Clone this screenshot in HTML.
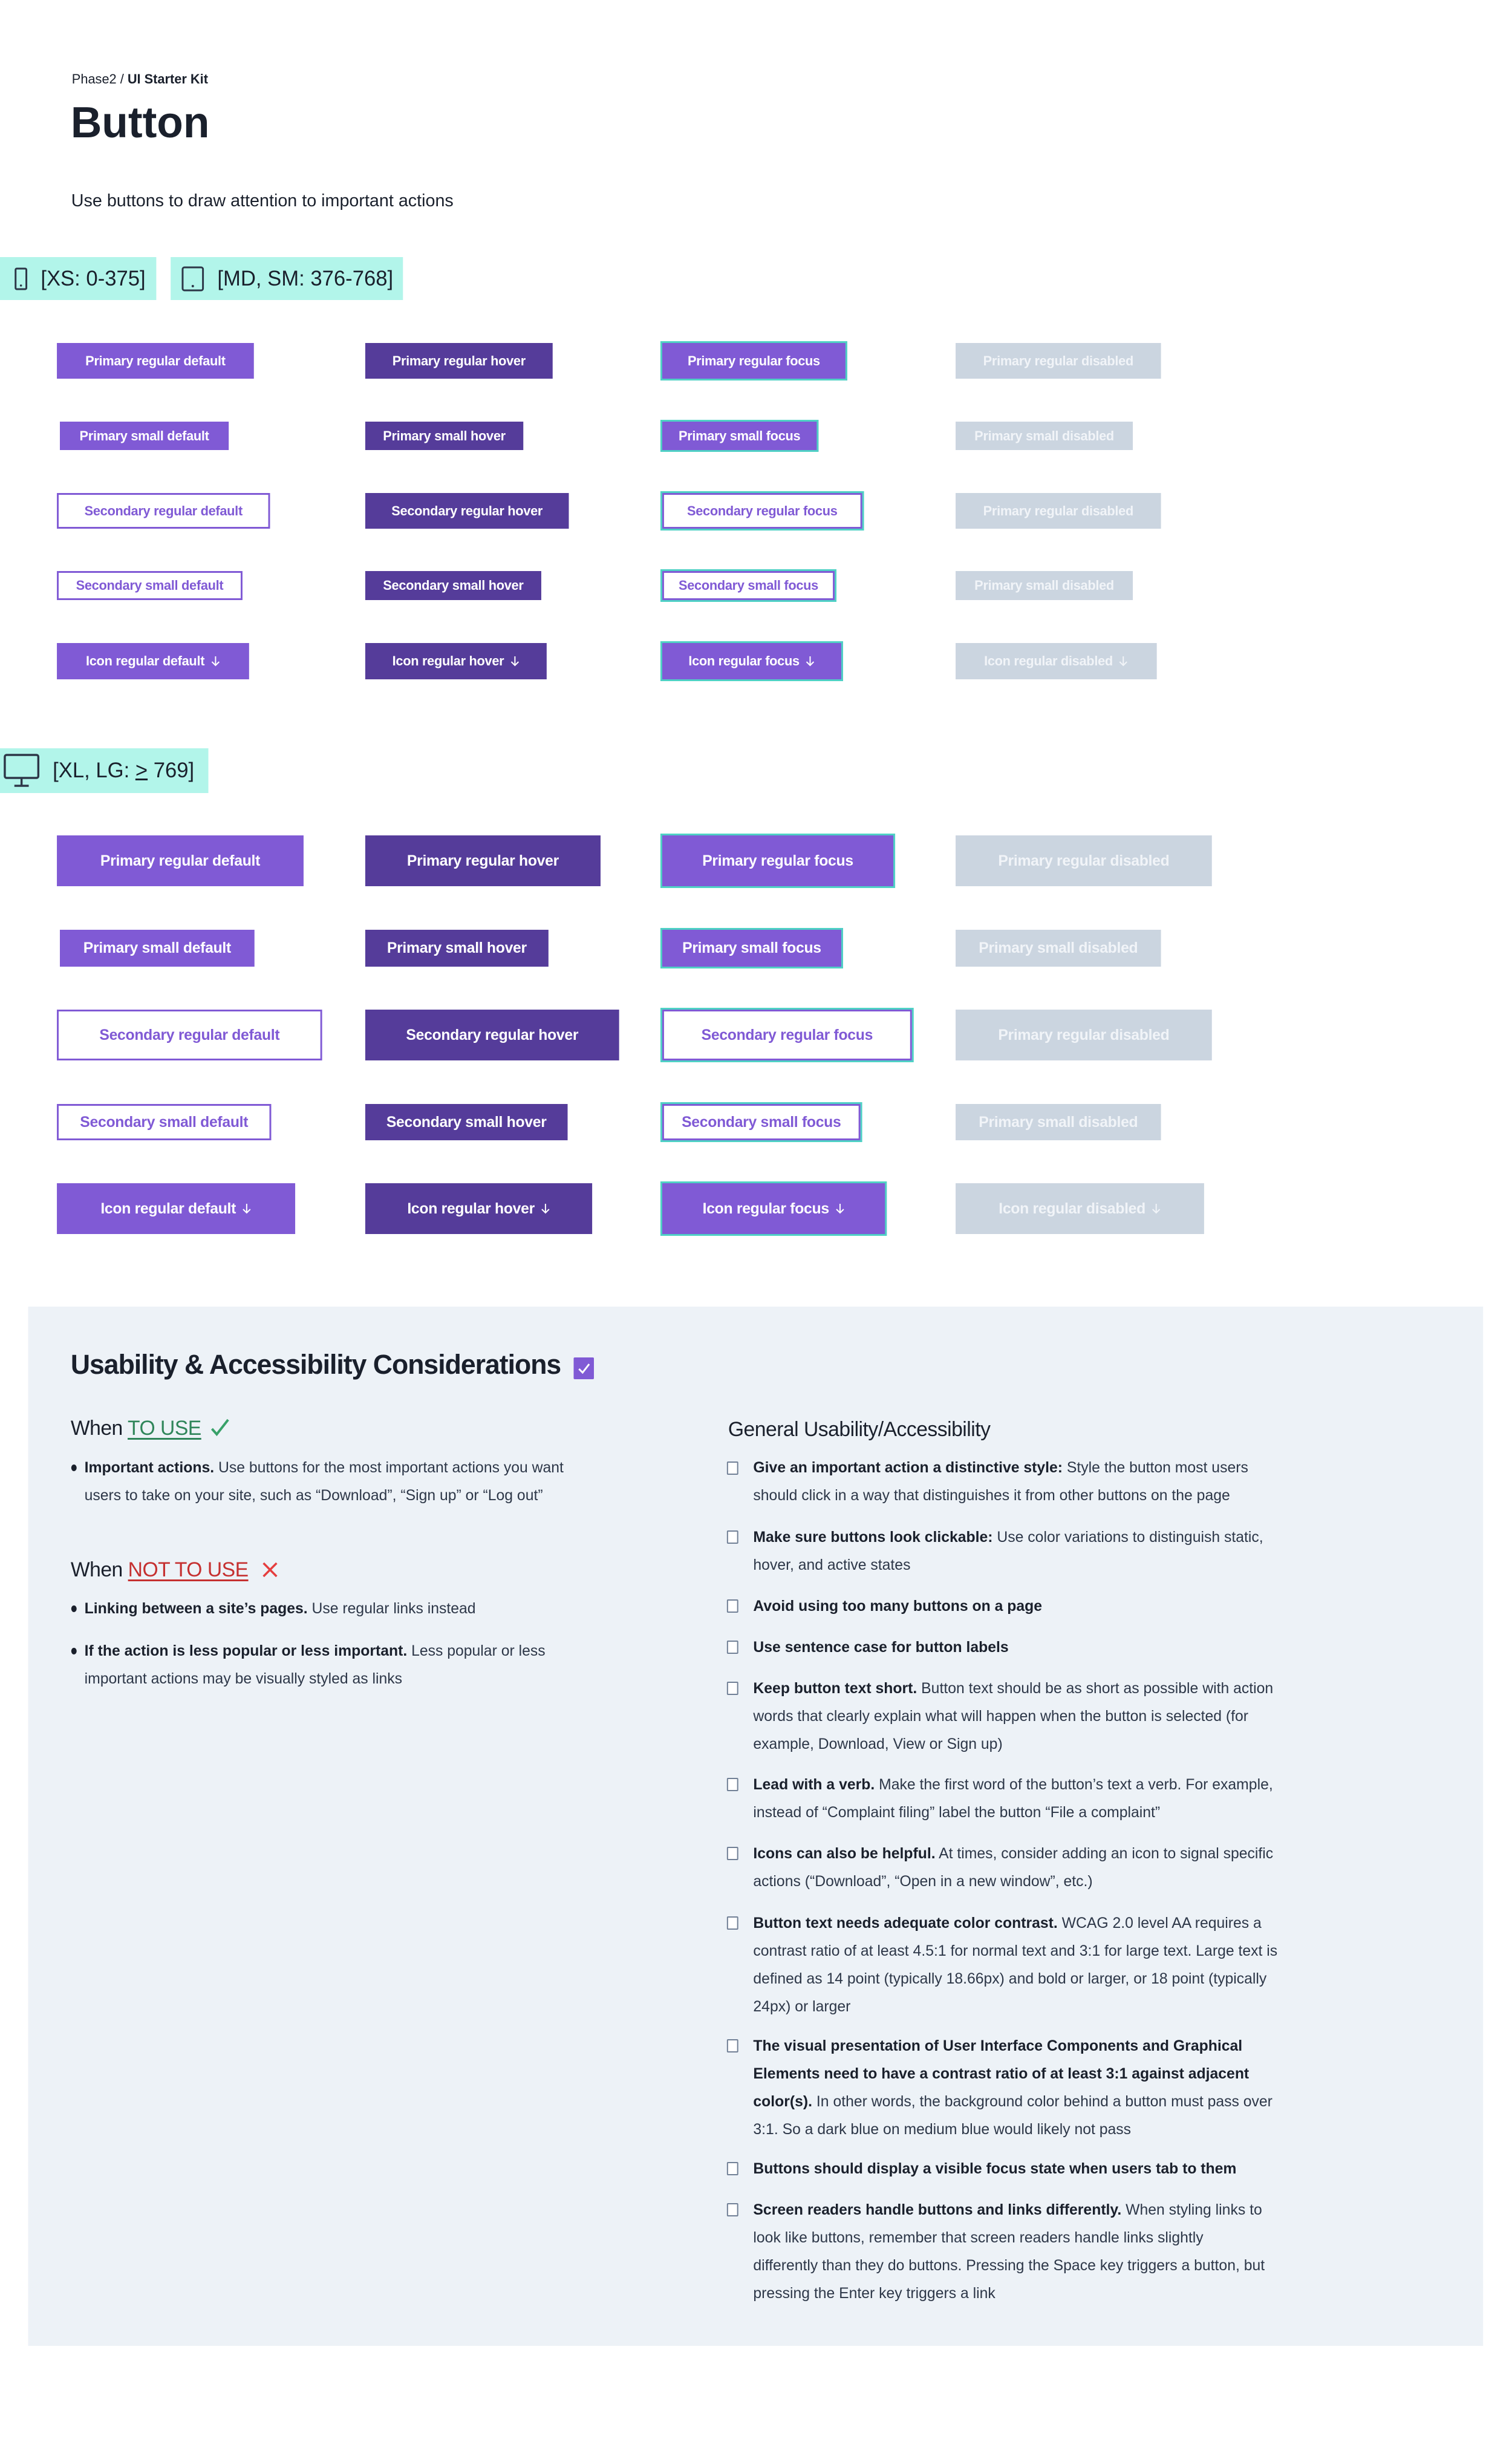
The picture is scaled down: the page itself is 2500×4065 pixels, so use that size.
<!DOCTYPE html>
<html><head><meta charset="utf-8">
<style>
*{margin:0;padding:0;box-sizing:border-box}
body{width:2500px;height:4065px;background:#fff;position:relative;font-family:"Liberation Sans",sans-serif;color:#1a202c;overflow:hidden}
#w{position:absolute;left:0;top:0;width:2500px;height:4065px;transform:scale(0.99,1);transform-origin:0 0}
.a{position:absolute}
.b{position:absolute;display:flex;align-items:center;justify-content:center;font-weight:bold;white-space:nowrap;color:#fff;letter-spacing:-0.3px}
.s{font-size:22px}.l{font-size:25px}
.p{background:#805ad5}
.h{background:#553c9a}
.d{background:#cbd5e0;color:#f1f4f8}
.f{background:#805ad5;border:3px solid #4fd1c5}
.sd{background:#fff;border:3px solid #805ad5;color:#805ad5}
.sf{background:#fff;border:3px solid #805ad5;color:#805ad5;box-shadow:0 0 0 3px #4fd1c5}
.ar{display:inline-block;margin-left:10px;width:16px;height:18px}
.badge{position:absolute;background:#b2f5ea;display:flex;align-items:center;font-size:35px;color:#1a202c}
.t{font-size:25px;line-height:46px;color:#2d3748;white-space:nowrap}
.t b{color:#1a202c}
.cb{position:absolute;width:19px;height:22px;border:2.5px solid #718096;border-radius:2px;background:#fff}
.dot{position:absolute;width:9px;height:11px;border-radius:50%;background:#1a202c}
#pn{position:absolute;left:0;top:-6px;width:2500px;height:4065px}
#rc{position:absolute;left:8px;top:0;width:2500px;height:4065px}
</style></head><body><div id="w">

<div class="a" style="left:120px;top:118px;font-size:22px;color:#1a202c">Phase2 / <b>UI Starter Kit</b></div>
<div class="a" style="left:118px;top:162px;font-size:72px;font-weight:bold;color:#1a202c">Button</div>
<div class="a" style="left:119px;top:316px;font-size:29px;color:#1a202c">Use buttons to draw attention to important actions</div>

<div class="badge" style="left:0;top:425px;width:261px;height:71px">
<svg style="margin-left:24px" width="22" height="38" viewBox="0 0 22 38"><rect x="2" y="2" width="18" height="34" rx="2" fill="none" stroke="#2d3748" stroke-width="3"/><circle cx="11" cy="30" r="1.8" fill="#2d3748"/></svg>
<span style="margin-left:22px">[XS: 0-375]</span></div>
<div class="badge" style="left:285px;top:425px;width:388px;height:71px">
<svg style="margin-left:18px" width="38" height="42" viewBox="0 0 38 42"><rect x="2" y="2" width="34" height="38" rx="3" fill="none" stroke="#2d3748" stroke-width="3"/><circle cx="19" cy="33" r="2" fill="#2d3748"/></svg>
<span style="margin-left:22px">[MD, SM: 376-768]</span></div>

<div class="b s p" style="left:95px;top:567px;width:329px;height:59px">Primary regular default</div>
<div class="b s h" style="left:610px;top:567px;width:313px;height:59px">Primary regular hover</div>
<div class="b s f" style="left:1103px;top:564px;width:312px;height:65px">Primary regular focus</div>
<div class="b s d" style="left:1596px;top:567px;width:343px;height:59px">Primary regular disabled</div>

<div class="b s p" style="left:100px;top:697px;width:282px;height:47px">Primary small default</div>
<div class="b s h" style="left:610px;top:697px;width:264px;height:47px">Primary small hover</div>
<div class="b s f" style="left:1103px;top:694px;width:264px;height:53px">Primary small focus</div>
<div class="b s d" style="left:1596px;top:697px;width:296px;height:47px">Primary small disabled</div>

<div class="b s sd" style="left:95px;top:815px;width:356px;height:59px">Secondary regular default</div>
<div class="b s h" style="left:610px;top:815px;width:340px;height:59px">Secondary regular hover</div>
<div class="b s sf" style="left:1106px;top:815px;width:334px;height:59px">Secondary regular focus</div>
<div class="b s d" style="left:1596px;top:815px;width:343px;height:59px">Primary regular disabled</div>

<div class="b s sd" style="left:95px;top:944px;width:310px;height:48px">Secondary small default</div>
<div class="b s h" style="left:610px;top:944px;width:294px;height:48px">Secondary small hover</div>
<div class="b s sf" style="left:1106px;top:944px;width:288px;height:48px">Secondary small focus</div>
<div class="b s d" style="left:1596px;top:944px;width:296px;height:48px">Primary small disabled</div>

<div class="b s p" style="left:95px;top:1063px;width:321px;height:60px">Icon regular default<svg class="ar" viewBox="0 0 16 18"><path d="M8 1V16M2 10L8 16L14 10" fill="none" stroke="currentColor" stroke-width="2"/></svg></div>
<div class="b s h" style="left:610px;top:1063px;width:303px;height:60px">Icon regular hover<svg class="ar" viewBox="0 0 16 18"><path d="M8 1V16M2 10L8 16L14 10" fill="none" stroke="currentColor" stroke-width="2"/></svg></div>
<div class="b s f" style="left:1103px;top:1060px;width:305px;height:66px">Icon regular focus<svg class="ar" viewBox="0 0 16 18"><path d="M8 1V16M2 10L8 16L14 10" fill="none" stroke="currentColor" stroke-width="2"/></svg></div>
<div class="b s d" style="left:1596px;top:1063px;width:336px;height:60px">Icon regular disabled<svg class="ar" viewBox="0 0 16 18"><path d="M8 1V16M2 10L8 16L14 10" fill="none" stroke="currentColor" stroke-width="2"/></svg></div>

<div class="badge" style="left:0;top:1237px;width:348px;height:74px">
<svg style="margin-left:6px" width="60" height="56" viewBox="0 0 60 56"><rect x="2" y="2" width="56" height="38" rx="3" fill="none" stroke="#2d3748" stroke-width="3.5"/><path d="M30 40V52M18 53H42" stroke="#2d3748" stroke-width="3.5" fill="none"/></svg>
<span style="margin-left:22px">[XL, LG: <u>&gt;</u> 769]</span></div>

<div class="b l p" style="left:95px;top:1381px;width:412px;height:84px">Primary regular default</div>
<div class="b l h" style="left:610px;top:1381px;width:393px;height:84px">Primary regular hover</div>
<div class="b l f" style="left:1103px;top:1378px;width:392px;height:90px">Primary regular focus</div>
<div class="b l d" style="left:1596px;top:1381px;width:428px;height:84px">Primary regular disabled</div>

<div class="b l p" style="left:100px;top:1537px;width:325px;height:61px">Primary small default</div>
<div class="b l h" style="left:610px;top:1537px;width:306px;height:61px">Primary small hover</div>
<div class="b l f" style="left:1103px;top:1534px;width:305px;height:67px">Primary small focus</div>
<div class="b l d" style="left:1596px;top:1537px;width:343px;height:61px">Primary small disabled</div>

<div class="b l sd" style="left:95px;top:1669px;width:443px;height:84px">Secondary regular default</div>
<div class="b l h" style="left:610px;top:1669px;width:424px;height:84px">Secondary regular hover</div>
<div class="b l sf" style="left:1106px;top:1669px;width:417px;height:84px">Secondary regular focus</div>
<div class="b l d" style="left:1596px;top:1669px;width:428px;height:84px">Primary regular disabled</div>

<div class="b l sd" style="left:95px;top:1825px;width:358px;height:60px">Secondary small default</div>
<div class="b l h" style="left:610px;top:1825px;width:338px;height:60px">Secondary small hover</div>
<div class="b l sf" style="left:1106px;top:1825px;width:331px;height:60px">Secondary small focus</div>
<div class="b l d" style="left:1596px;top:1825px;width:343px;height:60px">Primary small disabled</div>

<div class="b l p" style="left:95px;top:1956px;width:398px;height:84px">Icon regular default<svg class="ar" viewBox="0 0 16 18"><path d="M8 1V16M2 10L8 16L14 10" fill="none" stroke="currentColor" stroke-width="2"/></svg></div>
<div class="b l h" style="left:610px;top:1956px;width:379px;height:84px">Icon regular hover<svg class="ar" viewBox="0 0 16 18"><path d="M8 1V16M2 10L8 16L14 10" fill="none" stroke="currentColor" stroke-width="2"/></svg></div>
<div class="b l f" style="left:1103px;top:1953px;width:378px;height:90px">Icon regular focus<svg class="ar" viewBox="0 0 16 18"><path d="M8 1V16M2 10L8 16L14 10" fill="none" stroke="currentColor" stroke-width="2"/></svg></div>
<div class="b l d" style="left:1596px;top:1956px;width:415px;height:84px">Icon regular disabled<svg class="ar" viewBox="0 0 16 18"><path d="M8 1V16M2 10L8 16L14 10" fill="none" stroke="currentColor" stroke-width="2"/></svg></div>

<div class="a" style="left:47px;top:2160px;width:2430px;height:1718px;background:#edf2f7"></div>

<div id="pn">
<div class="a" style="left:118px;top:2236px;font-size:45px;font-weight:bold;letter-spacing:-1px;color:#1a202c">Usability &amp; Accessibility Considerations</div>
<svg class="a" style="left:958px;top:2250px" width="34" height="36" viewBox="0 0 34 36"><rect width="34" height="36" rx="2" fill="#805ad5"/><path d="M9 19L15 25L26 11" stroke="#fff" stroke-width="3" fill="none"/></svg>

<div class="a" style="left:118px;top:2348px;font-size:34px;color:#1a202c;letter-spacing:-0.5px">When <span style="color:#2f855a;text-decoration:underline;text-underline-offset:5px">TO USE</span>
<svg width="34" height="32" viewBox="0 0 34 32" style="vertical-align:-4px;margin-left:6px"><path d="M3 18L11 27L30 3" stroke="#38a169" stroke-width="4" fill="none"/></svg></div>
<div class="dot" style="left:119px;top:2427px"></div>
<div class="a t" style="left:141px;top:2409px"><b>Important actions.</b> Use buttons for the most important actions you want<br>users to take on your site, such as “Download”, “Sign up” or “Log out”</div>

<div class="a" style="left:118px;top:2582px;font-size:34px;color:#1a202c;letter-spacing:-0.5px">When <span style="color:#c53030;text-decoration:underline;text-underline-offset:5px">NOT TO USE</span>
<svg width="30" height="30" viewBox="0 0 30 30" style="vertical-align:-4px;margin-left:12px"><path d="M4 4L26 26M26 4L4 26" stroke="#e53e3e" stroke-width="3.5" fill="none"/></svg></div>
<div class="dot" style="left:119px;top:2660px"></div>
<div class="a t" style="left:141px;top:2642px"><b>Linking between a site’s pages.</b> Use regular links instead</div>
<div class="dot" style="left:119px;top:2730px"></div>
<div class="a t" style="left:141px;top:2712px"><b>If the action is less popular or less important.</b> Less popular or less<br>important actions may be visually styled as links</div>

<div id="rc">
<div class="a" style="left:1208px;top:2350px;font-size:34px;color:#1a202c;letter-spacing:-0.5px">General Usability/Accessibility</div>

<div class="cb" style="left:1206px;top:2422px"></div>
<div class="a t" style="left:1250px;top:2409px"><b>Give an important action a distinctive style:</b> Style the button most users<br>should click in a way that distinguishes it from other buttons on the page</div>
<div class="cb" style="left:1206px;top:2536px"></div>
<div class="a t" style="left:1250px;top:2524px"><b>Make sure buttons look clickable:</b> Use color variations to distinguish static,<br>hover, and active states</div>
<div class="cb" style="left:1206px;top:2650px"></div>
<div class="a t" style="left:1250px;top:2638px"><b>Avoid using too many buttons on a page</b></div>
<div class="cb" style="left:1206px;top:2718px"></div>
<div class="a t" style="left:1250px;top:2706px"><b>Use sentence case for button labels</b></div>
<div class="cb" style="left:1206px;top:2786px"></div>
<div class="a t" style="left:1250px;top:2774px"><b>Keep button text short.</b> Button text should be as short as possible with action<br>words that clearly explain what will happen when the button is selected (for<br>example, Download, View or Sign up)</div>
<div class="cb" style="left:1206px;top:2945px"></div>
<div class="a t" style="left:1250px;top:2933px"><b>Lead with a verb.</b> Make the first word of the button’s text a verb. For example,<br>instead of “Complaint filing” label the button “File a complaint”</div>
<div class="cb" style="left:1206px;top:3059px"></div>
<div class="a t" style="left:1250px;top:3047px"><b>Icons can also be helpful.</b> At times, consider adding an icon to signal specific<br>actions (“Download”, “Open in a new window”, etc.)</div>
<div class="cb" style="left:1206px;top:3174px"></div>
<div class="a t" style="left:1250px;top:3162px"><b>Button text needs adequate color contrast.</b> WCAG 2.0 level AA requires a<br>contrast ratio of at least 4.5:1 for normal text and 3:1 for large text. Large text is<br>defined as 14 point (typically 18.66px) and bold or larger, or 18 point (typically<br>24px) or larger</div>
<div class="cb" style="left:1206px;top:3377px"></div>
<div class="a t" style="left:1250px;top:3365px"><b>The visual presentation of User Interface Components and Graphical<br>Elements need to have a contrast ratio of at least 3:1 against adjacent<br>color(s).</b> In other words, the background color behind a button must pass over<br>3:1. So a dark blue on medium blue would likely not pass</div>
<div class="cb" style="left:1206px;top:3580px"></div>
<div class="a t" style="left:1250px;top:3568px"><b>Buttons should display a visible focus state when users tab to them</b></div>
<div class="cb" style="left:1206px;top:3648px"></div>
<div class="a t" style="left:1250px;top:3636px"><b>Screen readers handle buttons and links differently.</b> When styling links to<br>look like buttons, remember that screen readers handle links slightly<br>differently than they do buttons. Pressing the Space key triggers a button, but<br>pressing the Enter key triggers a link</div>
</div>
</div>

</div></body></html>
